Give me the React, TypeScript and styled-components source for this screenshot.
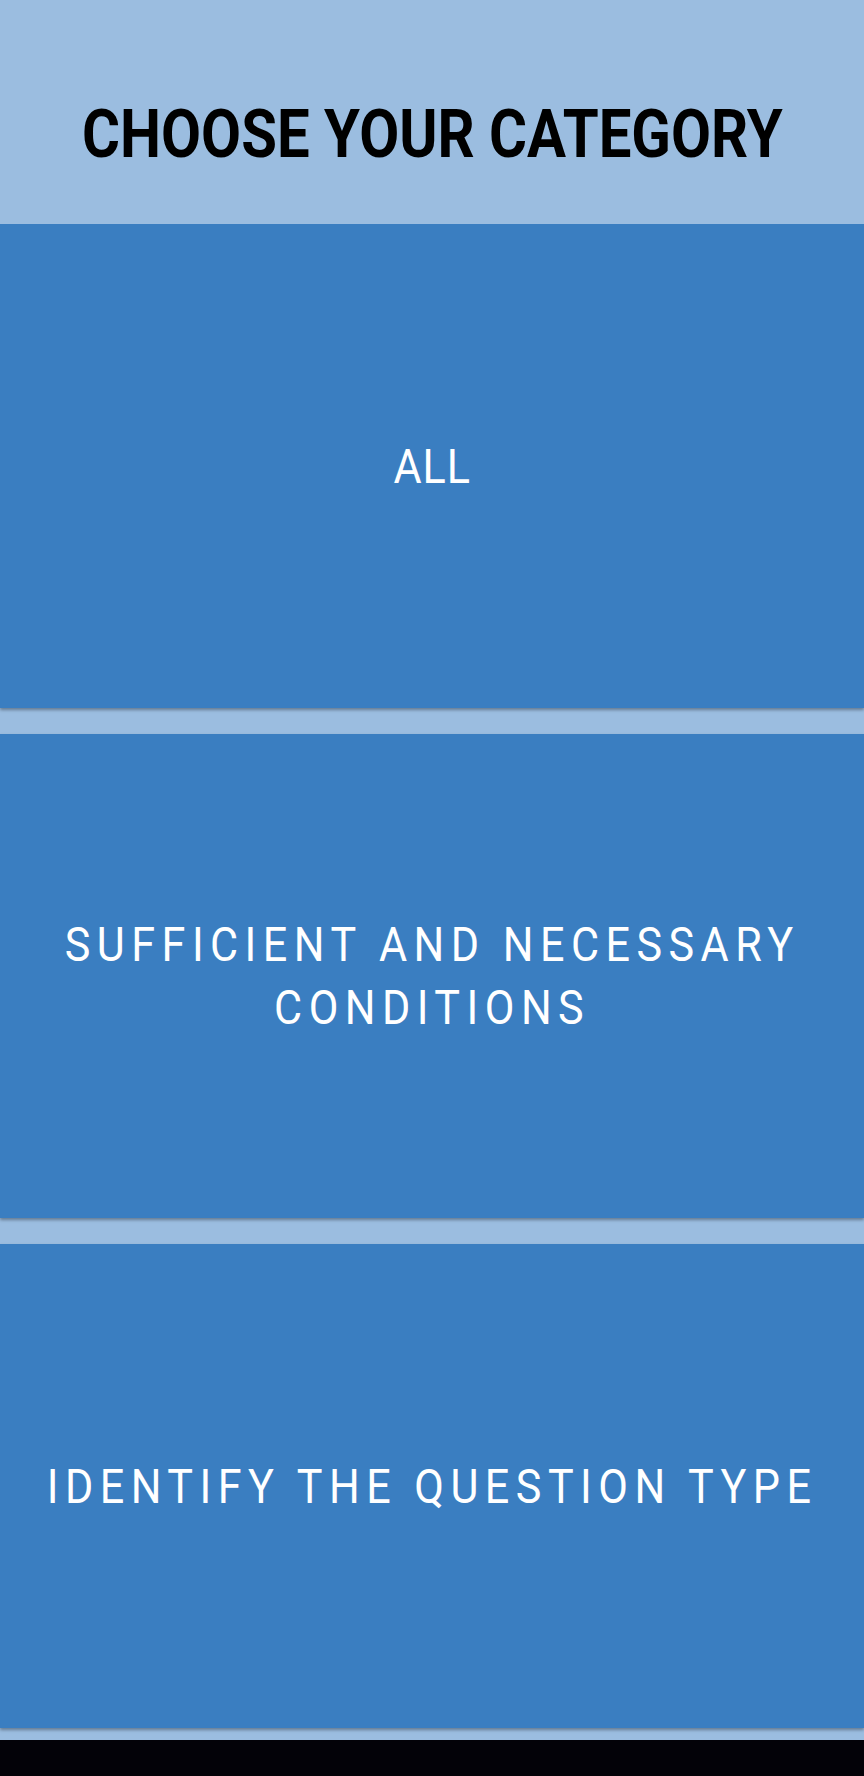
import React from "react";
import styled, { createGlobalStyle } from "styled-components";

const GlobalStyle = createGlobalStyle`
  html, body {
    margin: 0;
    padding: 0;
    background: #9bbde0;
  }
  body {
    font-family: Roboto, "Liberation Sans", sans-serif;
  }
  * { box-sizing: border-box; }
`;

const Screen = styled.div`
  width: 864px;
  height: 1776px;
  display: flex;
  flex-direction: column;
  background: #9bbde0;
  overflow: hidden;
`;

const Header = styled.header`
  height: 224px;
  flex-shrink: 0;
  padding-top: 46px;
  display: flex;
  align-items: center;
  justify-content: center;
  overflow: hidden;
`;

const Title = styled.h1`
  margin: 0;
  flex-shrink: 0;
  width: 120%;
  text-align: center;
  font-family: Roboto, "Liberation Sans", sans-serif;
  font-weight: 700;
  font-size: 66px;
  line-height: 1;
  color: #000;
  transform: scaleX(0.88);
`;

const List = styled.div`
  flex: 1;
  display: flex;
  flex-direction: column;
  gap: 26px;
  overflow: hidden;
`;

const Card = styled.button`
  height: 484px;
  flex-shrink: 0;
  border: none;
  padding: 0;
  margin: 0;
  width: 100%;
  background: #3a7ec1;
  box-shadow: 0 2px 3px rgba(0, 0, 0, 0.35);
  display: flex;
  align-items: center;
  justify-content: center;
  overflow: hidden;
  cursor: pointer;
`;

const Label = styled.span<{ $spaced: boolean }>`
  display: block;
  flex-shrink: 0;
  width: 113%;
  padding: 0 30px;
  text-align: center;
  font-family: Roboto, "Liberation Sans", sans-serif;
  font-weight: 400;
  font-size: 49px;
  line-height: 63px;
  letter-spacing: ${(p) => (p.$spaced ? "0.15em" : "0.02em")};
  color: #ffffff;
  transform: scaleX(0.88);
`;

const NavBar = styled.div`
  height: 36px;
  flex-shrink: 0;
  background: #030208;
`;

const categories = [
  { label: "ALL", spaced: false },
  { label: "SUFFICIENT AND NECESSARY CONDITIONS", spaced: true },
  { label: "IDENTIFY THE QUESTION TYPE", spaced: true },
];

export default function App() {
  return (
    <>
      <GlobalStyle />
      <Screen>
        <Header>
          <Title>CHOOSE YOUR CATEGORY</Title>
        </Header>
        <List>
          {categories.map((c) => (
            <Card key={c.label}>
              <Label $spaced={c.spaced}>{c.label}</Label>
            </Card>
          ))}
        </List>
        <NavBar />
      </Screen>
    </>
  );
}
